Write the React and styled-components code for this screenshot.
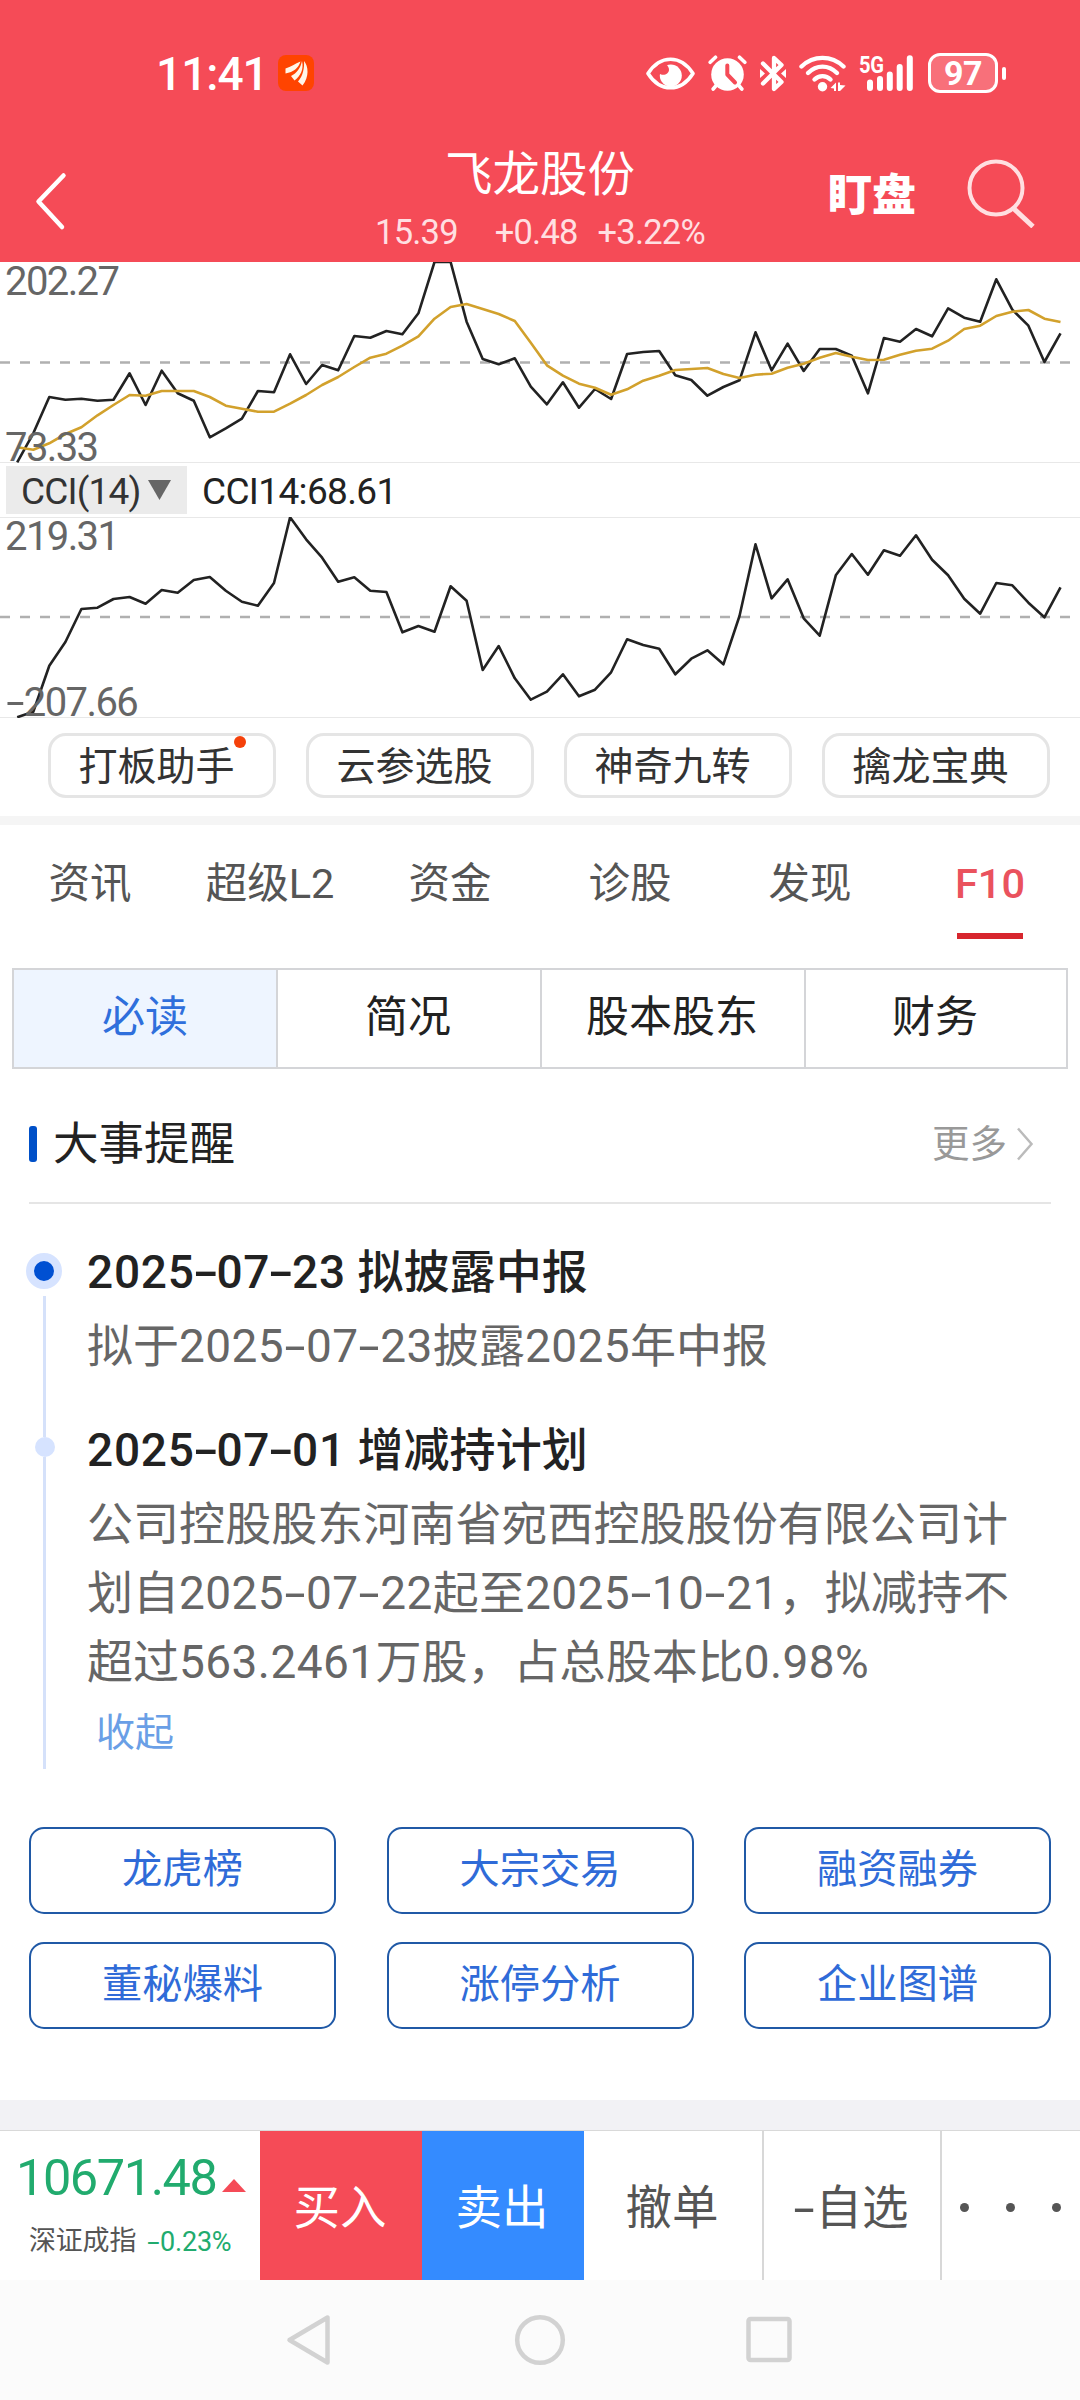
import React from "react";
import styled, { createGlobalStyle } from "styled-components";

const GlobalStyle = createGlobalStyle`
  * { box-sizing: border-box; }
  body {
    margin: 0;
    background: #ffffff;
    font-family: Roboto, "Noto Sans CJK SC", sans-serif;
    color: #222222;
  }
`;

const RED = "#f54b57";

const Screen = styled.div`
  width: 1080px;
  height: 2400px;
  display: flex;
  flex-direction: column;
  overflow: hidden;
  background: #ffffff;
`;

/* ---------- header ---------- */

const Header = styled.header`
  height: 262px;
  flex: none;
  background: ${RED};
  color: #ffffff;
`;

const StatusBar = styled.div`
  height: 146px;
  padding: 0 74px 0 156px;
  display: flex;
  align-items: center;
`;

const Clock = styled.span`
  width: 122px;
  font-size: 46px;
  line-height: 56px;
  font-weight: 500;
  letter-spacing: -1px;
  white-space: nowrap;
  padding-top: 2px;
`;

const StatusIcons = styled.div`
  margin-left: auto;
  display: flex;
  align-items: center;
  gap: 13px;
`;

const Signal = styled.div`
  display: grid;
  width: 54px;
  height: 36px;
  & > * { grid-area: 1 / 1; }
`;

const SignalLabel = styled.span`
  font-size: 24px;
  line-height: 20px;
  font-weight: 700;
  letter-spacing: -0.5px;
  transform: scaleX(0.84);
  transform-origin: left top;
`;

const Battery = styled.div`
  display: flex;
  align-items: center;
  gap: 4px;
  margin-left: 2px;
`;

const BatteryBody = styled.div`
  width: 70px;
  height: 40px;
  border: 3px solid #ffffff;
  border-radius: 12px;
  background: #f8707a;
  font-size: 34px;
  line-height: 34px;
  font-weight: 700;
  letter-spacing: -0.6px;
  text-align: center;
`;

const BatteryTip = styled.div`
  width: 4px;
  height: 13px;
  border-radius: 2px;
  background: #ffffff;
`;

const TitleBar = styled.div`
  height: 116px;
  display: grid;
  grid-template-columns: 1fr auto 1fr;
`;

const BackButton = styled.div`
  padding: 26px 0 0 34px;
`;

const TitleBlock = styled.div`
  display: flex;
  flex-direction: column;
  align-items: center;
`;

const StockName = styled.h1`
  margin: 1px 0 0;
  font-size: 47.5px;
  line-height: 56px;
  font-weight: 400;
`;

const Quote = styled.div`
  margin-top: 9px;
  display: flex;
  font-size: 34.5px;
  line-height: 40px;
  letter-spacing: -0.8px;
  color: #ffdfe1;
  white-space: pre;
  span + span { margin-left: 37px; }
  span + span + span { margin-left: 20px; }
`;

const HeaderActions = styled.div`
  display: flex;
  justify-content: flex-end;
  padding: 12px 44px 0 0;
`;

const WatchLabel = styled.span`
  font-size: 44px;
  line-height: 76px;
  font-weight: 900;
  margin-right: 50px;
`;

/* ---------- charts ---------- */

const ChartPanel = styled.div`
  position: relative;
  height: 201px;
  flex: none;
  svg { display: block; }
`;

const AxisLabel = styled.span`
  position: absolute;
  left: ${(p) => (p.$negative ? 7 : 5)}px;
  ${(p) => (p.$bottom ? "bottom: -5px;" : "top: 0;")}
  font-size: 40px;
  line-height: 40px;
  letter-spacing: -1.6px;
  color: #666666;
  white-space: nowrap;
`;

const IndicatorRow = styled.div`
  height: 54px;
  flex: none;
  padding: 3px 6px;
  display: flex;
  align-items: center;
  font-size: 37px;
  line-height: 46px;
  white-space: nowrap;
`;

const IndicatorSelect = styled.div`
  width: 181px;
  height: 48px;
  padding: 3px 16px 0 15px;
  display: flex;
  align-items: center;
  justify-content: space-between;
  background: #ebebeb;
  color: #333333;
  letter-spacing: -0.85px;
  svg { margin-bottom: 4px; }
`;

const IndicatorValue = styled.span`
  margin-left: 15px;
  padding-top: 3px;
  letter-spacing: -0.65px;
`;

/* ---------- tool pills ---------- */

const PillRow = styled.div`
  height: 98px;
  flex: none;
  padding: 15px 30px 0 48px;
  display: flex;
  gap: 30px;
`;

const Pill = styled.div`
  position: relative;
  width: 228px;
  height: 65px;
  border: 3px solid #e5e5e5;
  border-radius: 18px;
  padding-right: 11px;
  text-align: center;
  font-size: 39px;
  line-height: 63px;
  color: #333333;
  white-space: nowrap;
`;

const RedDot = styled.i`
  position: absolute;
  top: 0;
  right: 27px;
  width: 12px;
  height: 12px;
  border-radius: 50%;
  background: #f5410a;
`;

const Divider = styled.div`
  height: ${(p) => p.$h}px;
  flex: none;
  background: ${(p) => p.$color};
`;

/* ---------- tabs ---------- */

const Tabs = styled.nav`
  height: 143px;
  flex: none;
  display: grid;
  grid-template-columns: repeat(6, 1fr);
`;

const Tab = styled.div`
  display: flex;
  flex-direction: column;
  align-items: center;
  padding-top: 31px;
  font-size: 41.5px;
  line-height: 56px;
  color: ${(p) => (p.$active ? "#ea525d" : "#555555")};
  font-weight: ${(p) => (p.$active ? 500 : 400)};
`;

const TabLine = styled.div`
  width: 66px;
  height: 6px;
  margin-top: 21px;
  background: #d7262e;
`;

const Segments = styled.div`
  flex: none;
  width: 1056px;
  height: 101px;
  margin: 0 12px;
  border: 2px solid #d4d5d8;
  display: grid;
  grid-template-columns: 262px 264px 264px 1fr;
`;

const Segment = styled.div`
  text-align: center;
  font-size: 43px;
  line-height: 95px;
  color: ${(p) => (p.$active ? "#2f6fdc" : "#222222")};
  background: ${(p) => (p.$active ? "#eef5ff" : "#ffffff")};
  & + & { border-left: 2px solid #d4d5d8; padding-right: 2px; }
`;

/* ---------- reminders ---------- */

const SectionHead = styled.div`
  flex: none;
  height: 135px;
  margin: 0 29px;
  padding-top: 17px;
  border-bottom: 2px solid #e5e5e5;
  display: flex;
  align-items: center;
`;

const SectionMark = styled.div`
  width: 8px;
  height: 36px;
  margin-right: 16px;
  border-radius: 3px;
  background: #0050c8;
`;

const SectionTitle = styled.h2`
  margin: 0;
  padding-top: 2px;
  font-size: 45.5px;
  line-height: 60px;
  font-weight: 400;
`;

const More = styled.div`
  margin-left: auto;
  padding-right: 17px;
  display: flex;
  align-items: center;
  gap: 9px;
  font-size: 37.5px;
  line-height: 60px;
  color: #999999;
`;

const Timeline = styled.div`
  flex: none;
  height: 623px;
  padding-top: 30px;
`;

const Event = styled.div`
  display: grid;
  grid-template-columns: 87px 1fr;
  height: ${(p) => p.$h}px;
`;

const EventCopy = styled.div`
  padding-top: 1px;
`;

const Rail = styled.div`
  display: flex;
  flex-direction: column;
  align-items: center;
  padding-left: 2px;
`;

const ActiveDot = styled.div`
  width: 36px;
  height: 36px;
  margin: 19px 1px 7px 0;
  border: 8px solid #d6e3ff;
  border-radius: 50%;
  background: #0050d2;
  flex: none;
`;

const SmallDot = styled.div`
  width: 20px;
  height: 20px;
  border-radius: 50%;
  background: #d6e3ff;
  flex: none;
`;

const RailLine = styled.div`
  width: 3px;
  height: ${(p) => (p.$h ? `${p.$h}px` : "auto")};
  flex: ${(p) => (p.$h ? "none" : 1)};
  background: #d5e1fa;
`;

const EventTitle = styled.div`
  margin-bottom: 3px;
  font-size: 46px;
  line-height: 74px;
  font-weight: 500;
  letter-spacing: 0.1px;
  white-space: nowrap;
`;

const EventLine = styled.div`
  font-size: 46px;
  line-height: 69px;
  letter-spacing: 0.05px;
  color: #666666;
  white-space: nowrap;
`;

const Digits = styled.span`
  letter-spacing: 0.4px;
  ${EventTitle} & { letter-spacing: 0.75px; }
`;

const Dash = styled.span`
  display: inline-block;
  width: ${(p) => p.$w || 0.475}em;
  text-align: center;
  letter-spacing: 0;
  transform: scaleX(1.65);
`;

const Collapse = styled.div`
  padding-left: 9px;
  font-size: 39px;
  line-height: 70px;
  margin-top: 1px;
  color: #6a9fe6;
`;

/* ---------- shortcuts ---------- */

const Shortcuts = styled.div`
  flex: none;
  height: 273px;
  padding: 0 29px;
  display: grid;
  grid-template-columns: repeat(3, 307px);
  grid-auto-rows: 87px;
  justify-content: space-between;
  row-gap: 28px;
`;

const Shortcut = styled.div`
  border: 2px solid #2059a6;
  border-radius: 15px;
  text-align: center;
  font-size: 40.3px;
  line-height: 81px;
  color: #2f6bd8;
`;

/* ---------- trade bar ---------- */

const TradeBar = styled.div`
  flex: none;
  height: 150px;
  border-top: 1px solid #d9d9d9;
  display: grid;
  grid-template-columns: 260px 162px 162px 178px 178px 140px;
`;

const IndexCell = styled.div`
  color: #21ab6e;
  padding: 18px 0 0 16px;
`;

const IndexValue = styled.div`
  display: flex;
  align-items: center;
  font-size: 50.5px;
  line-height: 58px;
  letter-spacing: -1.45px;
  svg { margin: 15px 0 0 6px; }
`;

const IndexName = styled.div`
  margin-top: 19px;
  padding-left: 13px;
  display: flex;
  font-size: 27px;
  line-height: 30px;
  letter-spacing: -0.2px;
  color: #555555;
  white-space: nowrap;
`;

const IndexChange = styled.span`
  margin-left: 11px;
  padding-top: 1px;
  color: #21ab6e;
`;

const TradeCell = styled.div`
  display: flex;
  align-items: center;
  justify-content: center;
  padding: 4px 2px 0 0;
  font-size: 46.5px;
  line-height: 60px;
  color: ${(p) => (p.$bg ? "#ffffff" : "#555555")};
  background: ${(p) => p.$bg || "#ffffff"};
  border-left: ${(p) => (p.$line ? "2px solid #d8d8d8" : "none")};
  white-space: nowrap;
`;

const MoreDots = styled.div`
  display: flex;
  gap: 37px;
  i { width: 9px; height: 9px; border-radius: 50%; background: #555555; }
`;

const SystemNav = styled.div`
  flex: none;
  height: 120px;
  background: #fbfbfb;
  display: flex;
  justify-content: center;
  align-items: center;
  svg { display: block; }
`;

/* ---------- data ---------- */

const STEP = 16.05;
const START_X = 17.2;

const FAST = [
  622, 535, 426, 434, 431, 437, 434, 355, 450, 347, 415, 437, 547, 520, 491, 408, 412, 298, 387, 330, 346, 243,
  248, 228, 238, 175, 21, 21, 200, 312, 328, 310, 395, 448, 382, 458, 402, 432, 297, 291, 288, 361, 375, 422,
  396, 376, 232, 346, 266, 348, 282, 282, 302, 415, 249, 260, 222, 244, 160, 188, 200, 73, 164, 212, 321, 235,
];
const SLOW = [
  577, 584, 565, 537, 517, 481, 450, 420, 422, 408, 408, 408, 426, 452, 461, 470, 470, 446, 420, 390, 366, 336,
  308, 296, 272, 244, 191, 156, 147, 162, 177, 198, 263, 331, 362, 386, 398, 419, 403, 377, 362, 345, 342, 339,
  357, 369, 359, 356, 338, 326, 308, 294, 305, 315, 314, 299, 287, 281, 257, 222, 212, 183, 170, 165, 191, 201,
];
const CCI = [
  682, 665, 527, 456, 357, 353, 327, 321, 341, 300, 308, 270, 261, 302, 335, 347, 279, 82, 148, 203, 275, 262,
  302, 306, 427, 408, 425, 289, 332, 540, 468, 565, 629, 605, 553, 619, 599, 547, 448, 465, 476, 553, 506, 481,
  523, 378, 163, 325, 268, 385, 437, 256, 192, 254, 181, 197, 136, 209, 256, 326, 371, 279, 286, 338, 382, 292,
];

const toPoints = (series, offset) =>
  series.map((v, i) => `${(START_X + i * STEP).toFixed(1)},${(v / 3 - offset).toFixed(1)}`).join(" ");

const PILLS = ["打板助手", "云参选股", "神奇九转", "擒龙宝典"];
const TABS = ["资讯", "超级L2", "资金", "诊股", "发现", "F10"];
const SEGMENTS = ["必读", "简况", "股本股东", "财务"];
const SHORTCUTS = ["龙虎榜", "大宗交易", "融资融券", "董秘爆料", "涨停分析", "企业图谱"];

/* Numbers and hyphens get their own spacing inside Chinese copy. */
function Mixed({ text }) {
  return text.split(/([\d.%-]+)/).map((part, i) =>
    i % 2 ? (
      <Digits key={i}>
        {part.split(/(-)/).map((s, j) => (s === "-" ? <Dash key={j}>-</Dash> : s))}
      </Digits>
    ) : (
      part
    )
  );
}

/* ---------- icons ---------- */

const AppBadge = () => (
  <svg width="36" height="36" viewBox="0 0 36 36">
    <rect width="36" height="36" rx="8" fill="#ff4400" />
    <g fill="#fff6e8">
      <path d="M7.500 13.500C13 12 17 8.500 22.500 6.500C20.500 13 15.500 17 7.500 18.500Z" />
      <path d="M13 21C19 18 22.500 13 24 6C26 14.500 22.500 21 16.500 25.500Z" />
      <path d="M20 26.500C25 21 26.500 13 26 6C30.500 11 31.500 22 24.500 30.500Z" />
    </g>
  </svg>
);

const EyeIcon = () => (
  <svg width="49" height="33" viewBox="0 0 49 33">
    <path
      d="M2 16.500C9 5.500 17 2.200 24.500 2.200S40 5.500 47 16.500C40 27.500 32 30.800 24.500 30.800S9 27.500 2 16.500Z"
      fill="none" stroke="#fff" strokeWidth="3.600" strokeLinejoin="round"
    />
    <circle cx="24.800" cy="18.500" r="11" fill="#fff" />
    <path d="M12 15.500C16 19.500 22.500 18 23 13C23.200 10.500 21.500 8.500 20 7L12 8Z" fill={RED} />
  </svg>
);

const AlarmIcon = () => (
  <svg width="39" height="36" viewBox="0 0 39 36">
    <circle cx="19.500" cy="19.500" r="16.300" fill="#fff" />
    <g stroke="#fff" strokeWidth="3.600" strokeLinecap="round">
      <path d="M2.200 7.300L7.500 2.200M36.800 7.300L31.500 2.200" />
      <path d="M5.200 34L9 29.500M33.800 34L30 29.500" />
    </g>
    <path d="M19.300 10.500V19.500L27 27.500" fill="none" stroke={RED} strokeWidth="4" strokeLinecap="round" strokeLinejoin="round" />
  </svg>
);

const BluetoothIcon = () => (
  <svg width="26" height="37" viewBox="0 0 26 37">
    <path
      d="M3 8.500L21.500 27L14 34V3L21.500 10L3 28.500"
      fill="none" stroke="#fff" strokeWidth="4.300" strokeLinecap="round" strokeLinejoin="round"
    />
    <path d="M0 14L5 18.500L0 23ZM26 14L21 18.500L26 23Z" fill="#fff" />
  </svg>
);

const WifiIcon = () => (
  <svg width="47" height="37" viewBox="0 0 47 37">
    <g fill="none" stroke="#fff" strokeWidth="4.400" strokeLinecap="round">
      <path d="M2.500 11.500C14.500 0 32.500 0 44.500 11.500" />
      <path d="M9 18C17.500 9.500 29.500 9.500 38 18" />
      <path d="M15.500 24.500C20 20 27 20 31.500 24.500" />
    </g>
    <circle cx="23.500" cy="31.800" r="4.700" fill="#fff" />
    <path d="M37 27.500V36H35V33.500L31.500 33L37 27.500ZM39 27.500H41V30L46.500 30.500L41 36H39Z" fill="#fff" />
  </svg>
);

const SignalBars = () => (
  <svg width="54" height="36" viewBox="0 0 54 36">
    <g stroke="#fff" strokeWidth="6" strokeLinecap="round">
      <path d="M11 27.500V33M21 24V33M30.800 19.500V33M40.700 12V33M50.800 3.300V33" />
    </g>
  </svg>
);

const BackIcon = () => (
  <svg width="34" height="60" viewBox="0 0 34 60">
    <path d="M29.500 3.500L4.500 29.500L28 55" fill="none" stroke="#fff" strokeWidth="4.500" strokeLinecap="round" strokeLinejoin="round" />
  </svg>
);

const SearchIcon = () => (
  <svg width="70" height="70" viewBox="0 0 70 70">
    <g fill="none" stroke="#ffdfe1" strokeWidth="4">
      <circle cx="30" cy="30" r="26.500" />
      <path d="M47 50L67 68.500" strokeWidth="5" />
    </g>
  </svg>
);

/* ---------- page ---------- */

export default function App() {
  return (
    <Screen>
      <GlobalStyle />
      <Header>
        <StatusBar>
          <Clock>11:41</Clock>
          <AppBadge />
          <StatusIcons>
            <EyeIcon />
            <AlarmIcon />
            <BluetoothIcon />
            <WifiIcon />
            <Signal>
              <SignalLabel>5G</SignalLabel>
              <SignalBars />
            </Signal>
            <Battery>
              <BatteryBody>97</BatteryBody>
              <BatteryTip />
            </Battery>
          </StatusIcons>
        </StatusBar>
        <TitleBar>
          <BackButton>
            <BackIcon />
          </BackButton>
          <TitleBlock>
            <StockName>飞龙股份</StockName>
            <Quote>
              <span>15.39</span>
              <span>+0.48</span>
              <span>+3.22%</span>
            </Quote>
          </TitleBlock>
          <HeaderActions>
            <WatchLabel>盯盘</WatchLabel>
            <SearchIcon />
          </HeaderActions>
        </TitleBar>
      </Header>

      <ChartPanel>
        <AxisLabel>202.27</AxisLabel>
        <AxisLabel $bottom>73.33</AxisLabel>
        <svg width="1080" height="201" viewBox="0 0 1080 201">
          <path d="M0 100.500H1070" stroke="#b0b0b0" strokeWidth="2.600" strokeDasharray="10 10" />
          <path d="M0 200.500H1080" stroke="#e8e8e8" strokeWidth="1" />
          <polyline points={toPoints(FAST, 7)} fill="none" stroke="#222222" strokeWidth="2.600" strokeLinejoin="round" />
          <polyline points={toPoints(SLOW, 7)} fill="none" stroke="#d2a12c" strokeWidth="2.600" strokeLinejoin="round" />
        </svg>
      </ChartPanel>

      <IndicatorRow>
        <IndicatorSelect>
          <span>CCI(14)</span>
          <svg width="23" height="20" viewBox="0 0 23 20">
            <path d="M0 0H23L11.500 20Z" fill="#666666" />
          </svg>
        </IndicatorSelect>
        <IndicatorValue>CCI14:68.61</IndicatorValue>
      </IndicatorRow>

      <ChartPanel>
        <AxisLabel>219.31</AxisLabel>
        <AxisLabel $bottom $negative>
          <Dash $w={0.42}>-</Dash>207.66
        </AxisLabel>
        <svg width="1080" height="201" viewBox="0 0 1080 201">
          <path d="M0 .5H1080M0 200.500H1080" stroke="#e8e8e8" strokeWidth="1" />
          <path d="M0 100H1070" stroke="#b0b0b0" strokeWidth="2.600" strokeDasharray="10 10" />
          <polyline points={toPoints(CCI, 27)} fill="none" stroke="#222222" strokeWidth="2.600" strokeLinejoin="round" />
        </svg>
      </ChartPanel>

      <PillRow>
        {PILLS.map((name, i) => (
          <Pill key={name}>
            {name}
            {i === 0 && <RedDot />}
          </Pill>
        ))}
      </PillRow>
      <Divider $h={9} $color="#f5f5f5" />

      <Tabs>
        {TABS.map((name) => (
          <Tab key={name} $active={name === "F10"}>
            {name}
            {name === "F10" && <TabLine />}
          </Tab>
        ))}
      </Tabs>

      <Segments>
        {SEGMENTS.map((name, i) => (
          <Segment key={name} $active={i === 0}>
            {name}
          </Segment>
        ))}
      </Segments>

      <SectionHead>
        <SectionMark />
        <SectionTitle>大事提醒</SectionTitle>
        <More>
          更多
          <svg width="18" height="34" viewBox="0 0 18 34">
            <path d="M2 1.500L15.500 17L2 32.500" fill="none" stroke="#bbbbbb" strokeWidth="2.500" />
          </svg>
        </More>
      </SectionHead>

      <Timeline>
        <Event $h={178}>
          <Rail>
            <ActiveDot />
            <RailLine />
          </Rail>
          <EventCopy>
            <EventTitle>
              <Mixed text="2025-07-23 拟披露中报" />
            </EventTitle>
            <EventLine>
              <Mixed text="拟于2025-07-23披露2025年中报" />
            </EventLine>
          </EventCopy>
        </Event>
        <Event $h={360}>
          <Rail>
            <RailLine $h={25} />
            <SmallDot />
            <RailLine $h={312} />
          </Rail>
          <EventCopy>
            <EventTitle>
              <Mixed text="2025-07-01 增减持计划" />
            </EventTitle>
            <EventLine>公司控股股东河南省宛西控股股份有限公司计</EventLine>
            <EventLine>
              <Mixed text="划自2025-07-22起至2025-10-21，拟减持不" />
            </EventLine>
            <EventLine>
              <Mixed text="超过563.2461万股，占总股本比0.98%" />
            </EventLine>
            <Collapse>收起</Collapse>
          </EventCopy>
        </Event>
      </Timeline>

      <Shortcuts>
        {SHORTCUTS.map((name) => (
          <Shortcut key={name}>{name}</Shortcut>
        ))}
      </Shortcuts>
      <Divider $h={30} $color="#f2f2f5" />

      <TradeBar>
        <IndexCell>
          <IndexValue>
            10671.48
            <svg width="24" height="13" viewBox="0 0 24 13">
              <path d="M12 0L24 13H0Z" fill={RED} />
            </svg>
          </IndexValue>
          <IndexName>
            深证成指
            <IndexChange>
              <Dash>-</Dash>0.23%
            </IndexChange>
          </IndexName>
        </IndexCell>
        <TradeCell $bg={RED}>买入</TradeCell>
        <TradeCell $bg="#348bff">卖出</TradeCell>
        <TradeCell>撤单</TradeCell>
        <TradeCell $line>
          <Dash>-</Dash>自选
        </TradeCell>
        <TradeCell $line>
          <MoreDots>
            <i />
            <i />
            <i />
          </MoreDots>
        </TradeCell>
      </TradeBar>

      <SystemNav>
        <svg width="510" height="56" viewBox="0 0 510 56">
          <g fill="none" stroke="#d2d2d2" strokeWidth="4.500" strokeLinejoin="round">
            <path d="M42.500 5.500V50.500L4.500 28Z" />
            <circle cx="255" cy="28" r="22.800" />
            <rect x="463.500" y="7" width="41" height="41" rx="2" />
          </g>
        </svg>
      </SystemNav>
    </Screen>
  );
}
